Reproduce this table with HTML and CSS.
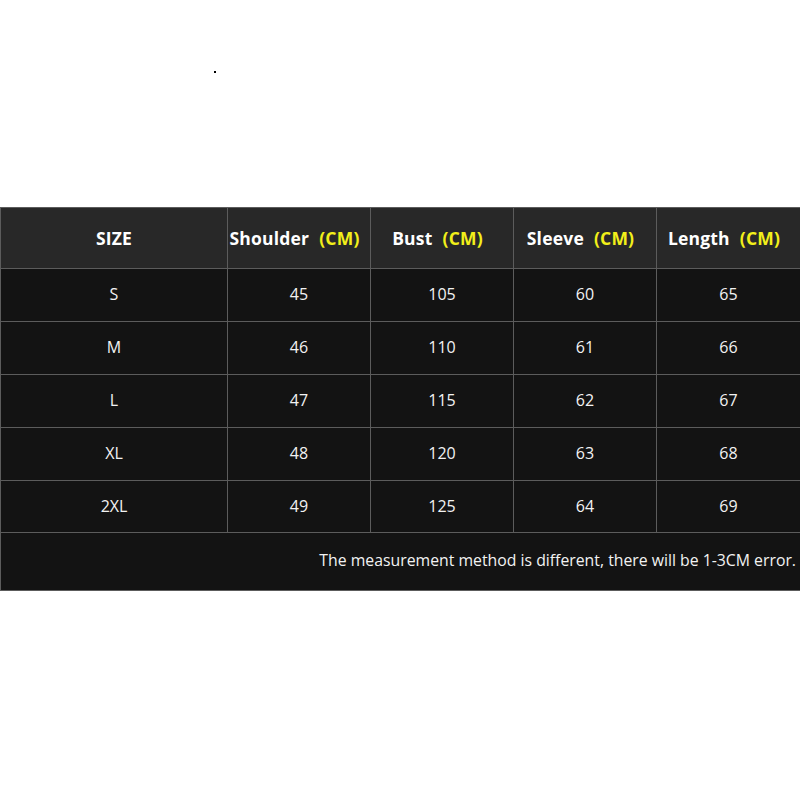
FILE: index.html
```html
<!DOCTYPE html>
<html>
<head>
<meta charset="utf-8">
<link rel="stylesheet" href="styles.css">
</head>
<body>
<div class="page">
  <span class="speck"></span>
  <div class="chart">
    <div class="cell head">SIZE</div>
    <div class="cell head measure">Shoulder<span class="unit">(CM)</span></div>
    <div class="cell head measure">Bust<span class="unit">(CM)</span></div>
    <div class="cell head measure">Sleeve<span class="unit">(CM)</span></div>
    <div class="cell head measure">Length<span class="unit">(CM)</span></div>

    <div class="cell">S</div><div class="cell">45</div><div class="cell">105</div><div class="cell">60</div><div class="cell">65</div>
    <div class="cell">M</div><div class="cell">46</div><div class="cell">110</div><div class="cell">61</div><div class="cell">66</div>
    <div class="cell">L</div><div class="cell">47</div><div class="cell">115</div><div class="cell">62</div><div class="cell">67</div>
    <div class="cell">XL</div><div class="cell">48</div><div class="cell">120</div><div class="cell">63</div><div class="cell">68</div>
    <div class="cell">2XL</div><div class="cell">49</div><div class="cell">125</div><div class="cell">64</div><div class="cell">69</div>

    <div class="cell note">The measurement method is different, there will be 1-3CM error.</div>
  </div>
</div>
</body>
</html>
```

FILE: styles.css
```css
html, body {
  margin: 0;
  padding: 0;
  background: #ffffff;
  overflow: hidden;
}

.page {
  position: relative;
  width: 800px;
  height: 800px;
  padding-top: 207px;
  box-sizing: border-box;
}

.speck {
  position: absolute;
  left: 214px;
  top: 71px;
  width: 2px;
  height: 2px;
  background: #000;
}

.chart {
  display: grid;
  grid-template-columns: 226px 142px 142px 142px 143px;
  grid-template-rows: 60px 52px 52px 52px 52px 51px 57px;
  gap: 1px;
  background: #5c5c5c;
  border-top: 1px solid #5c5c5c;
  border-left: 1px solid #5c5c5c;
  border-bottom: 1px solid #5c5c5c;
  width: 800px;
  box-sizing: border-box;
  font-family: "Open Sans", "Noto Sans", sans-serif;
  color: #f2f2f2;
}

.cell {
  background: #131313;
  display: flex;
  align-items: center;
  justify-content: center;
  font-size: 16px;
  padding-bottom: 2px;
}

.head {
  background: #282828;
  font-weight: 700;
  font-size: 17.5px;
  color: #ffffff;
  white-space: nowrap;
  letter-spacing: 0.2px;
  padding-bottom: 0;
}

.measure {
  padding-right: 9px;
}

.unit {
  color: #f2ef1a;
  margin-left: 10px;
}

.note {
  grid-column: 1 / -1;
  justify-content: flex-end;
  padding-right: 4px;
  padding-bottom: 4px;
  font-size: 15.8px;
}
```
